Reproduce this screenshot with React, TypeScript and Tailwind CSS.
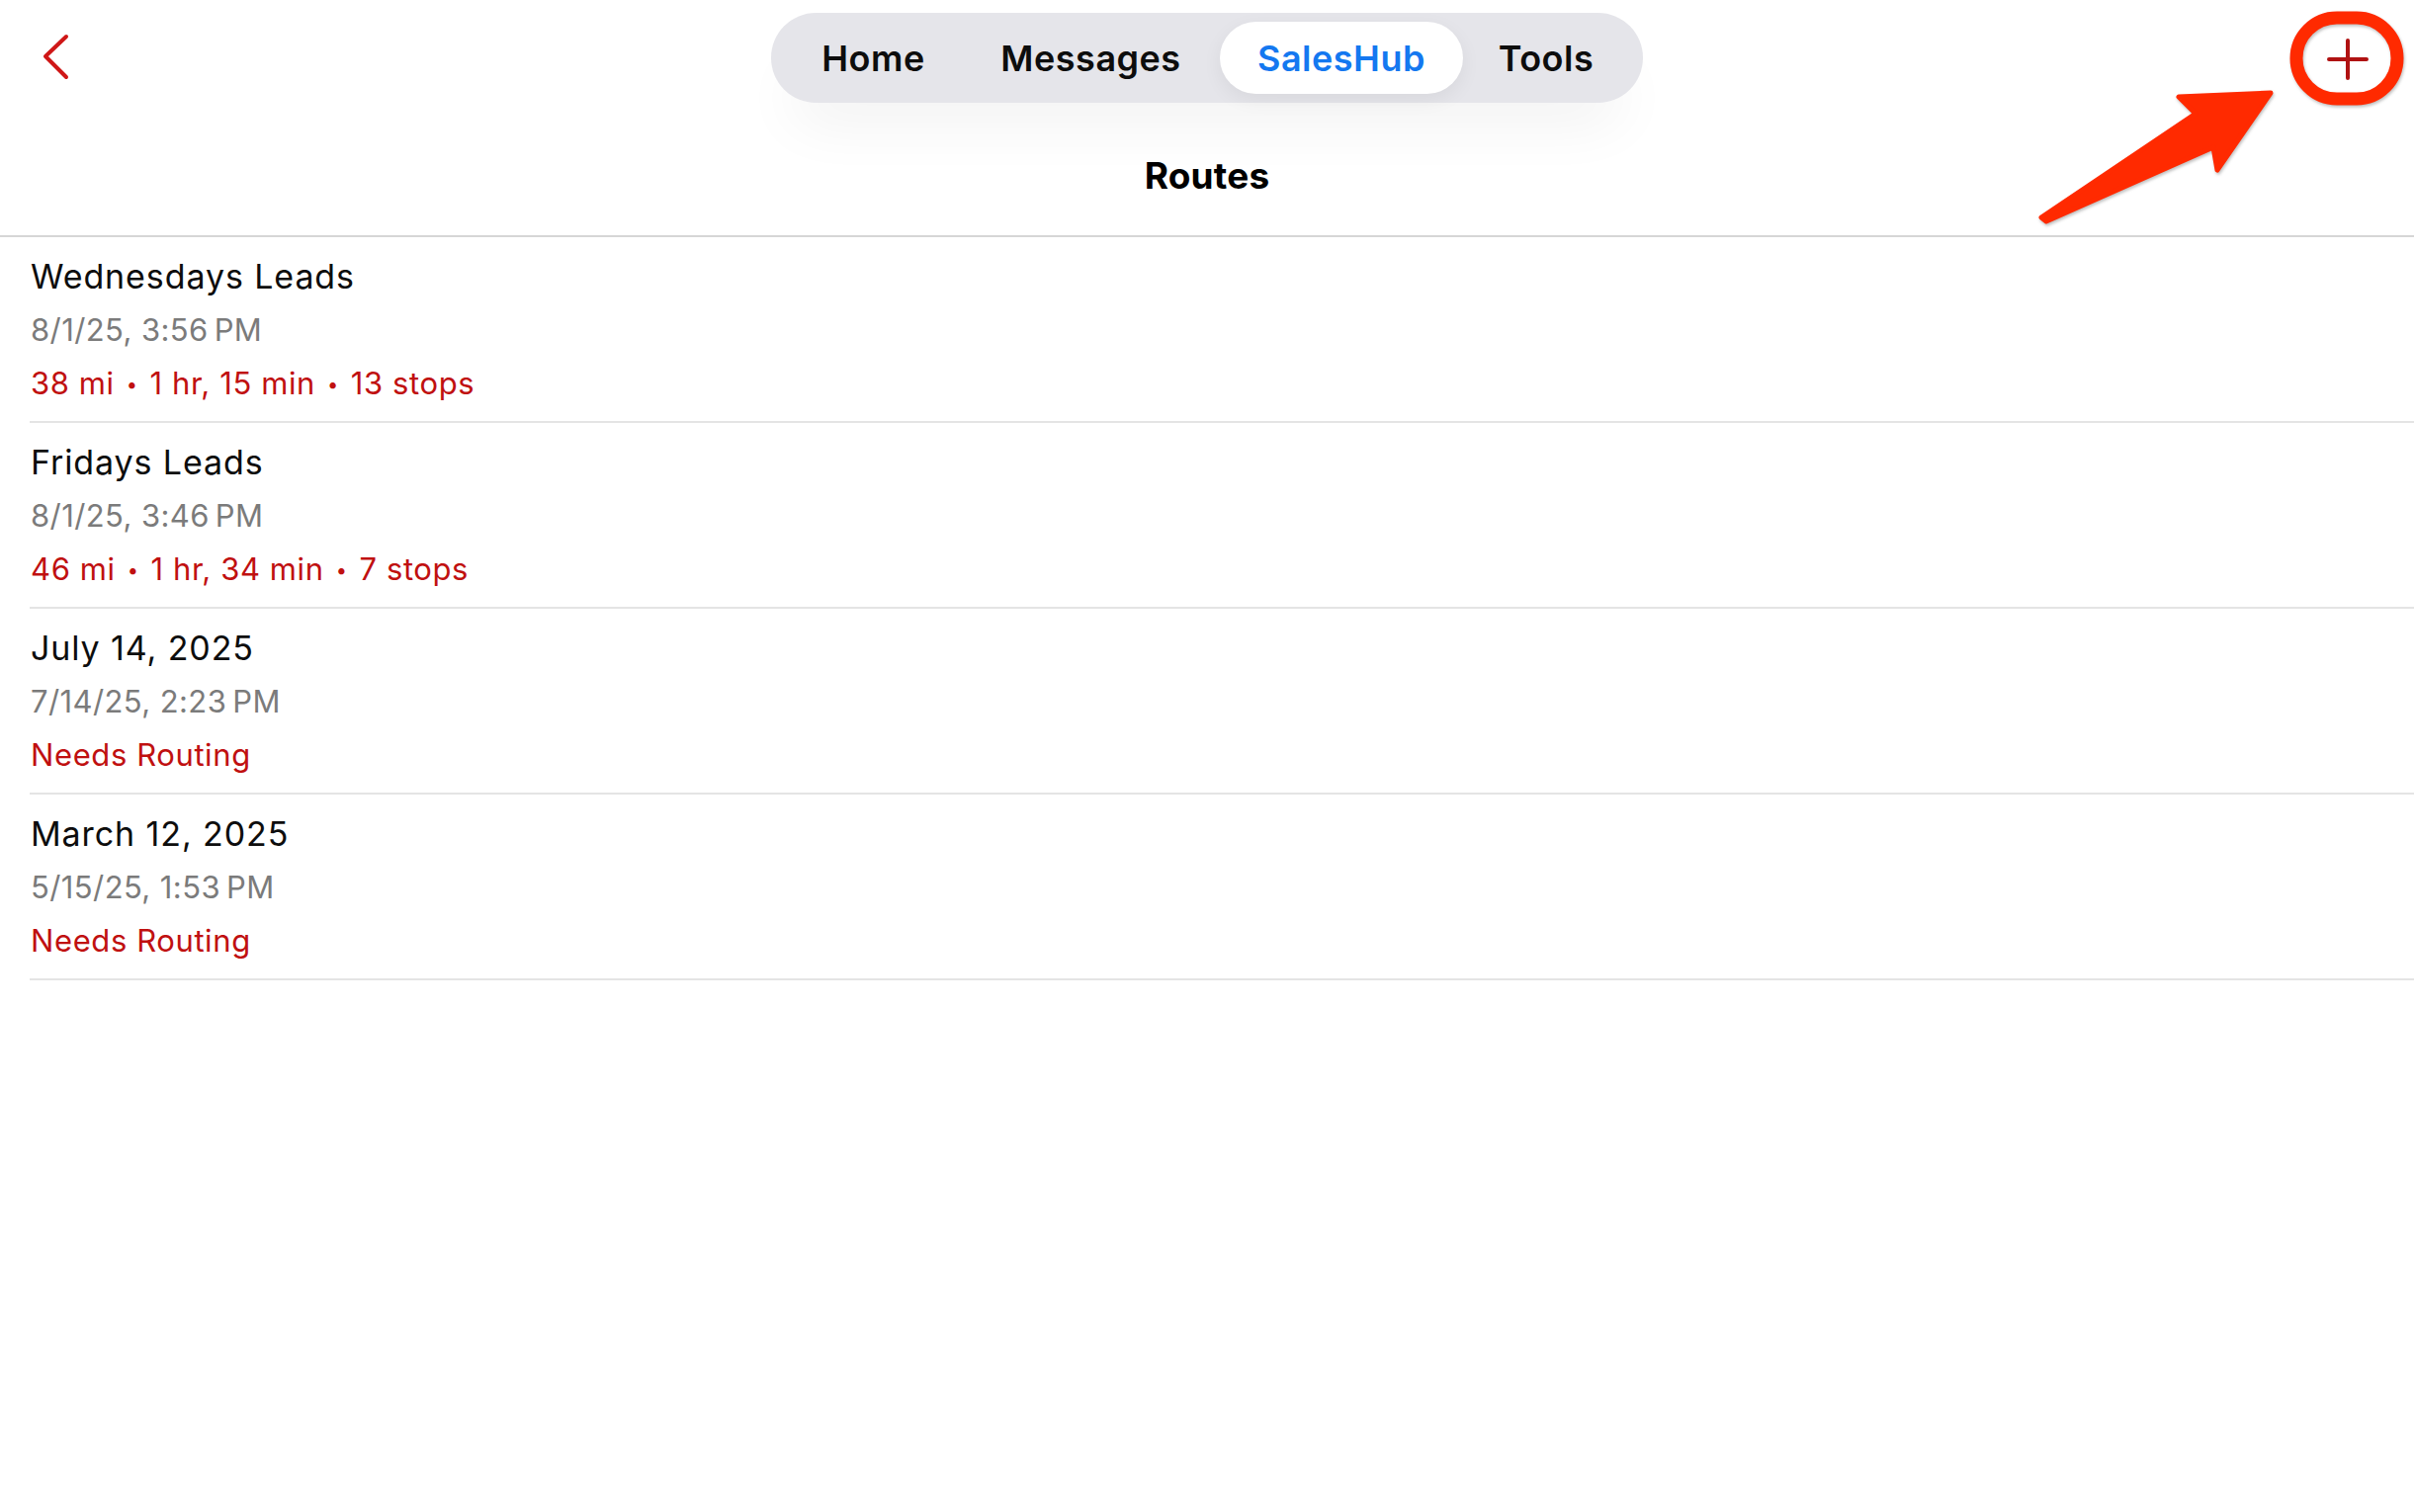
const routes = [
  { name: 'Wednesdays Leads', date: '8/1/25, 3:56\u202FPM', info: ['38 mi', '1 hr, 15 min', '13 stops'] },
  { name: 'Fridays Leads', date: '8/1/25, 3:46\u202FPM', info: ['46 mi', '1 hr, 34 min', '7 stops'] },
  { name: 'July 14, 2025', date: '7/14/25, 2:23\u202FPM', info: ['Needs Routing'] },
  { name: 'March 12, 2025', date: '5/15/25, 1:53\u202FPM', info: ['Needs Routing'] },
];

const tabs = [
  { label: 'Home', w: 'w-[179px]' },
  { label: 'Messages', w: 'w-[261px]' },
  { label: 'SalesHub', w: 'w-[246px]', active: true },
  { label: 'Tools', w: 'w-[168px]' },
];

export default function App() {
  return (
    <div className="relative w-full min-h-screen bg-white font-['Inter',sans-serif] text-black">
      {/* Top bar */}
      <header className="h-[240px] border-b-2 border-[#d6d6d6] flex flex-col">
        <div className="grid grid-cols-[1fr_auto_1fr] pt-[13px]">
          <div className="pl-[41px] pt-[20px]">
            <svg width="32" height="50" viewBox="0 0 32 50" fill="none">
              <path d="M26 4 L5 24 L26 45" stroke="#cf1717" strokeWidth="4" strokeLinecap="round" strokeLinejoin="round" />
            </svg>
          </div>

          <nav className="h-[91px] rounded-full bg-[#e5e5ea] px-[14px] flex items-center shadow-[0_40px_60px_-20px_rgba(0,0,0,0.06)]">
            {tabs.map((t) => (
              <div
                key={t.label}
                className={`${t.w} h-[73px] rounded-full flex items-center justify-center text-[36px] font-semibold tracking-[0.5px] ${
                  t.active ? 'bg-white text-[#1478f0] shadow-[0_6px_20px_rgba(0,0,0,0.06)]' : 'text-[#0d0d0d]'
                }`}
              >
                {t.label}
              </div>
            ))}
          </nav>

          <div className="flex justify-end pr-[45px] pt-[25px]">
            <svg width="44" height="44" viewBox="0 0 44 44" fill="none">
              <path d="M22 3 V41 M3 22 H41" stroke="#b01212" strokeWidth="4" strokeLinecap="round" />
            </svg>
          </div>
        </div>

        <h1 className="mt-[52px] text-center text-[37px] font-bold leading-[44px] tracking-[0.2px]">Routes</h1>
      </header>

      {/* Route list */}
      <ul>
        {routes.map((r) => (
          <li key={r.name} className="ml-[30px] h-[188px] border-b-2 border-[#e4e4e4] pl-[1px] pt-[13px]">
            <div className="text-[34px] leading-[54px] tracking-[0.9px] text-[#0d0d0d]">{r.name}</div>
            <div className="text-[31px] leading-[54px] tracking-[0.4px] text-[#7b7b7b]">{r.date}</div>
            <div className="text-[31px] leading-[54px] tracking-[0.6px] text-[#c01010]">
              {r.info.map((part, i) => (
                <span key={part}>
                  {i > 0 && <span className="mx-[12px] text-[20px] align-[3px]">•</span>}
                  {part}
                </span>
              ))}
            </div>
          </li>
        ))}
      </ul>

      {/* Annotation overlay */}
      <svg
        className="absolute inset-0 pointer-events-none"
        width="2442"
        height="1530"
        viewBox="0 0 2442 1530"
        fill="none"
      >
        <g style={{ filter: 'drop-shadow(1px 2px 1.5px rgba(0,0,0,0.25))' }}>
          <rect x="2323" y="18" width="102" height="82" rx="41" stroke="#ff2a00" strokeWidth="13" />
          <path
            d="M2065 220 L2221 115 L2204 98 L2297 94 L2243 172 L2239 149 L2070 224 Z"
            fill="#ff2a00"
            stroke="#ff2a00"
            strokeWidth="5"
            strokeLinejoin="round"
          />
        </g>
      </svg>
    </div>
  );
}
